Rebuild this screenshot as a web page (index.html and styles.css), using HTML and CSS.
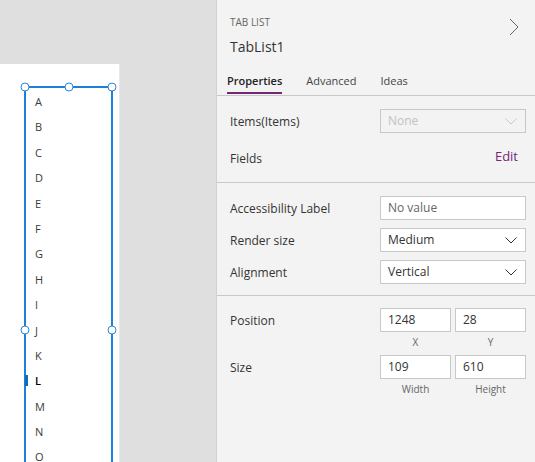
FILE: index.html
```html
<!DOCTYPE html>
<html lang="en">
<head>
    <meta charset="UTF-8">
    <title>TabList1</title>
    <link rel="stylesheet" href="styles.css">
</head>
<body>
    <div class="app">
        <div class="canvas">
            <div class="screen">
                <div class="tablist">
                    <span class="handle h-tl"></span>
                    <span class="handle h-tc"></span>
                    <span class="handle h-tr"></span>
                    <span class="handle h-ml"></span>
                    <span class="handle h-mr"></span>
                    <ul class="letters">
                        <li>A</li>
                        <li>B</li>
                        <li>C</li>
                        <li>D</li>
                        <li>E</li>
                        <li>F</li>
                        <li>G</li>
                        <li>H</li>
                        <li>I</li>
                        <li>J</li>
                        <li>K</li>
                        <li class="selected">L</li>
                        <li>M</li>
                        <li>N</li>
                        <li>O</li>
                    </ul>
                </div>
            </div>
        </div>

        <div class="panel">
            <div class="panel-head">
                <div>
                    <div class="kind">TAB LIST</div>
                    <div class="name">TabList1</div>
                </div>
                <svg class="next" width="10" height="18" viewBox="0 0 10 18">
                    <polyline points="1,1 9,9 1,17" fill="none" stroke="#666" stroke-width="1"/>
                </svg>
            </div>

            <div class="tabs">
                <span class="tab active">Properties</span>
                <span class="tab">Advanced</span>
                <span class="tab">Ideas</span>
            </div>

            <div class="section first">
                <div class="row">
                    <span class="label">Items(Items)</span>
                    <div class="field select disabled">
                        <span>None</span>
                        <svg width="12" height="7" viewBox="0 0 12 7"><polyline points="0.5,0.5 6,6 11.5,0.5" fill="none" stroke="#c8c8c8"/></svg>
                    </div>
                </div>
                <div class="row">
                    <span class="label">Fields</span>
                    <a class="edit">Edit</a>
                </div>
            </div>

            <div class="section">
                <div class="row">
                    <span class="label">Accessibility Label</span>
                    <div class="field placeholder">No value</div>
                </div>
                <div class="row">
                    <span class="label">Render size</span>
                    <div class="field select">
                        <span>Medium</span>
                        <svg width="12" height="7" viewBox="0 0 12 7"><polyline points="0.5,0.5 6,6 11.5,0.5" fill="none" stroke="#333"/></svg>
                    </div>
                </div>
                <div class="row">
                    <span class="label">Alignment</span>
                    <div class="field select">
                        <span>Vertical</span>
                        <svg width="12" height="7" viewBox="0 0 12 7"><polyline points="0.5,0.5 6,6 11.5,0.5" fill="none" stroke="#333"/></svg>
                    </div>
                </div>
            </div>

            <div class="section last">
                <div class="row">
                    <span class="label">Position</span>
                    <div class="pair">
                        <div class="field">1248</div>
                        <div class="field">28</div>
                    </div>
                </div>
                <div class="sub">
                    <span>X</span>
                    <span>Y</span>
                </div>
                <div class="row">
                    <span class="label">Size</span>
                    <div class="pair">
                        <div class="field">109</div>
                        <div class="field">610</div>
                    </div>
                </div>
                <div class="sub">
                    <span>Width</span>
                    <span>Height</span>
                </div>
            </div>
        </div>
    </div>
</body>
</html>
```

FILE: styles.css
```css
body {
    margin: 0;
    height: 462px;
    overflow: hidden;
    font-family: "Open Sans", "Noto Sans", sans-serif;
}

.app {
    display: flex;
    height: 462px;
}

/* canvas side */

.canvas {
    width: 217px;
    box-sizing: border-box;
    background: #dfdfdf;
    border-right: 1px solid #d2d2d2;
    padding-top: 64px;
}

.screen {
    width: 119px;
    height: 398px;
    background: #fff;
    overflow: hidden;
    box-shadow: 1px 0 0 #e8e8e8;
}

.tablist {
    position: relative;
    margin: 22px 0 0 24px;
    width: 89px;
    height: 484px;
    box-sizing: border-box;
    border: 2px solid #1e7fd6;
    border-bottom: none;
}

.handle {
    position: absolute;
    width: 9px;
    height: 9px;
    box-sizing: border-box;
    border: 1.5px solid #2b88d8;
    border-radius: 50%;
    background: #fff;
    transform: translate(-50%, -50%);
    z-index: 2;
}

.h-tl { left: -1px; top: -1px; }
.h-tc { left: 50%; top: -1px; }
.h-tr { left: calc(100% + 1px); top: -1px; }
.h-ml { left: -1px; top: 242px; }
.h-mr { left: calc(100% + 1px); top: 242px; }

.letters {
    list-style: none;
    margin: 0;
    padding: 1px 0 0;
}

.letters li {
    position: relative;
    height: 25.4px;
    line-height: 25.4px;
    padding-left: 9px;
    font-size: 11px;
    color: #3b3a39;
}

.letters li.selected {
    color: #000;
    font-weight: 600;
}

.letters li.selected::before {
    content: "";
    position: absolute;
    left: -1px;
    top: 7px;
    width: 3px;
    height: 11px;
    background: #0f6cbd;
}

/* properties panel */

.panel {
    flex: 1;
    background: #f3f3f3;
    color: #333;
}

.panel-head {
    display: flex;
    justify-content: space-between;
    padding: 15px 16px 0 13px;
}

.kind {
    font-size: 10px;
    line-height: 14px;
    color: #666;
}

.name {
    margin-top: 8px;
    font-size: 14px;
    line-height: 20px;
    color: #333;
}

.next {
    margin-top: 3px;
}

.tabs {
    display: flex;
    gap: 24px;
    margin-top: 16px;
    padding: 0 0 1px 10px;
    border-bottom: 1px solid #c8c8c8;
}

.tab {
    font-size: 11px;
    line-height: 16px;
    padding-bottom: 3px;
    border-bottom: 2px solid transparent;
    color: #444;
}

.tab.active {
    font-weight: 600;
    color: #222;
    border-bottom-color: #742774;
}

.section {
    display: flex;
    flex-direction: column;
    gap: 8px;
    padding: 13px 9px 11px 13px;
    border-bottom: 1px solid #c8c8c8;
}

.section.first {
    gap: 13px;
    padding-bottom: 12px;
}

.section.last {
    gap: 0;
    padding-top: 12px;
    border-bottom: none;
}

.row {
    display: flex;
    align-items: center;
    justify-content: space-between;
    height: 24px;
}

.label {
    font-size: 12px;
    color: #333;
}

.field {
    width: 146px;
    height: 24px;
    box-sizing: border-box;
    padding: 0 7px;
    background: #fff;
    border: 1px solid #c8c8c8;
    font-size: 12px;
    line-height: 22px;
    color: #333;
}

.field.placeholder {
    color: #666;
}

.field.select {
    display: flex;
    align-items: center;
    justify-content: space-between;
    padding-right: 8px;
}

.field.disabled {
    background: transparent;
    color: #c2c2c2;
}

.edit {
    margin-right: 8px;
    font-size: 13px;
    color: #742774;
    position: relative;
    top: -2px;
}

.pair {
    display: flex;
    gap: 4px;
}

.pair .field {
    width: 71px;
}

.sub {
    display: flex;
    justify-content: flex-end;
    gap: 4px;
    height: 22px;
    margin-top: 1px;
}

.sub span {
    width: 71px;
    text-align: center;
    font-size: 10px;
    line-height: 18px;
    color: #666;
}
```
